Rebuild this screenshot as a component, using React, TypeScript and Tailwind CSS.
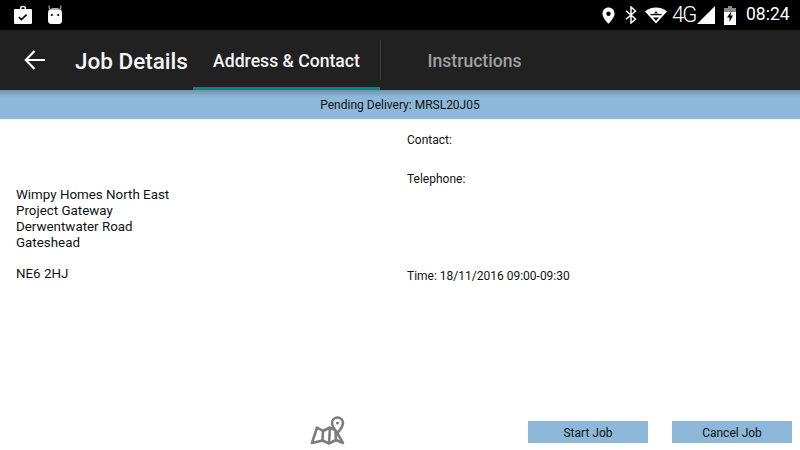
import React from "react";

function BagIcon() {
  return (
    <svg width="20" height="20" viewBox="0 0 20 20">
      <path fill="#fff" d="M7 3.200C7 1.600 8.200 0.800 10 0.800s3 .8 3 2.400V5h-1.400V3.200c0-.7-.6-1-1.600-1s-1.600.3-1.600 1V5H7z" />
      <rect x="1" y="4" width="18" height="15" rx="1.200" fill="#fff" />
      <path d="M5.800 12l2.600 2.600 5.200-5" fill="none" stroke="#000" strokeWidth="1.700" />
    </svg>
  );
}

function RobotIcon() {
  return (
    <svg width="16" height="20" viewBox="0 0 16 20">
      <path d="M2.500 4.500L2 .5M13.500 4.500L14 .5" stroke="#9a9a9a" strokeWidth="1.300" fill="none" />
      <path fill="#b5b5b5" d="M1 7c0-2.500 3-4 7-4s7 1.500 7 4z" />
      <rect x="1" y="5" width="14" height="14" rx="3.500" fill="#fff" />
      <circle cx="4.800" cy="10" r="1.100" fill="#000" />
      <circle cx="11.200" cy="10" r="1.100" fill="#000" />
    </svg>
  );
}

function StatusIcons() {
  return (
    <div className="flex items-center">
      <svg width="13" height="17" viewBox="0 0 14 18">
        <path
          fill="#fff"
          fillRule="evenodd"
          d="M7 .5C3.300.5.500 3.300.500 7c0 4.500 6.500 10.800 6.500 10.800S13.500 11.500 13.500 7C13.500 3.300 10.700.5 7 .5zm0 4.200a2.400 2.400 0 1 1 0 4.800 2.400 2.400 0 0 1 0-4.800z"
        />
      </svg>
      <svg width="12" height="18" viewBox="0 0 12 18" className="ml-[10px]">
        <path d="M1 4.800l9.500 8.200L6 17V1l4.500 4L1 13.200" fill="none" stroke="#fff" strokeWidth="1.500" />
      </svg>
      <svg width="22" height="17" viewBox="0 0 22 17" className="ml-[8px]">
        <path fill="#fff" d="M0 4.500C3 1.800 6.800.5 11 .5s8 1.300 11 4L11 16.500z" />
        <path fill="#000" d="M5.500 7h11v1.200h-11zM8 10.500h6L11 14z" />
        <path fill="#000" d="M9 6.500L11 4.200 13 6.500z" />
      </svg>
      <span className="ml-[5px] w-[24px] text-[22px] leading-none tracking-[-2px] font-[Roboto,sans-serif] font-light text-white">4G</span>
      <svg width="18" height="18" viewBox="0 0 18 18" className="ml-[1px]">
        <path fill="#fff" d="M18 0v18H0z" />
      </svg>
      <svg width="12" height="19" viewBox="0 0 12 19" className="ml-[9px]">
        <path fill="#8a8a8a" d="M4 0h4v2h4v5H0V2h4z" />
        <path fill="#fff" d="M0 6h12v13H0z" />
        <path fill="#000" d="M7.500 5L3 11.500h2.500V16L9 9.500H6.500z" />
      </svg>
      <span className="ml-[10px] w-[44px] text-[17.500px] leading-none font-[Roboto,sans-serif] text-white">08:24</span>
    </div>
  );
}

function MapIcon() {
  return (
    <svg width="36" height="30" viewBox="0 0 36 30" fill="none" stroke="#7d7d7d" strokeWidth="2.600">
      <path d="M2 27L7 11.500 13 15 20 11.500 26 15 33 27 26 24 19 27.500 12.500 24.500z" strokeLinejoin="round" />
      <path d="M12.500 24.500L13 15M19 27.500L20 11.500M26 24L25.500 16" />
      <path
        fill="#fff"
        d="M27.500 1.500a5.500 5.500 0 0 0-5.500 5.500c0 3.500 5.500 10 5.500 10s5.500-6.500 5.500-10A5.500 5.500 0 0 0 27.500 1.500z"
      />
      <circle cx="27.500" cy="7" r="1.500" fill="#7d7d7d" stroke="none" />
    </svg>
  );
}

export default function App() {
  return (
    <div className="flex h-[450px] w-[800px] flex-col overflow-hidden bg-white font-[Roboto,sans-serif]">
      <div className="flex h-[30px] shrink-0 items-center justify-between bg-black pl-[13px] pr-[10px]">
        <div className="flex items-center gap-[14px]">
          <BagIcon />
          <RobotIcon />
        </div>
        <StatusIcons />
      </div>

      <div className="flex h-[60px] shrink-0 bg-[#212121]">
        <div className="flex w-[193px] items-center pl-[23px] pt-[3px]">
          <svg width="24" height="24" viewBox="0 0 24 24" fill="none" stroke="#fff" strokeWidth="2.200" className="-mt-[3px]">
            <path d="M22 12H3M11.500 3L2.800 12l8.700 9" />
          </svg>
          <span className="ml-[28px] text-[22.500px] font-medium leading-none whitespace-nowrap text-[#f5f5f5]">Job Details</span>
        </div>
        <div className="flex h-full w-[187px] items-center justify-center border-b-[3px] border-[#00897b] pt-[5px] text-[17.600px] font-medium whitespace-nowrap text-[#f5f5f5]">
          Address &amp; Contact
        </div>
        <div className="mt-[10px] h-[40px] w-px bg-[#3d3d3d]" />
        <div className="flex h-full w-[187px] items-center justify-center pt-[2px] text-[17.600px] font-medium whitespace-nowrap text-[#a0a0a0]">
          Instructions
        </div>
      </div>

      <div className="flex h-[29px] shrink-0 items-center justify-center bg-[linear-gradient(#6f92b0_0px,#8db8da_7px,#8db8da_100%)] text-[12px] text-[#111]">
        Pending Delivery: MRSL20J05
      </div>

      <div className="flex flex-1 text-[#111]">
        <div className="w-[407px] pl-[16px] pt-[68px] text-[13.360px] leading-[16px]">
          <div>Wimpy Homes North East</div>
          <div>Project Gateway</div>
          <div>Derwentwater Road</div>
          <div>Gateshead</div>
          <div className="mt-[15px]">NE6 2HJ</div>
        </div>
        <div className="flex flex-1 flex-col pt-[13px] text-[12px] leading-[16px]">
          <div>Contact:</div>
          <div className="mt-[23px]">Telephone:</div>
          <div className="mt-[81px]">Time: 18/11/2016 09:00-09:30</div>
        </div>
      </div>

      <div className="relative flex h-[37px] shrink-0 items-start justify-end gap-[24px] pr-[8px] pt-[8px]">
        <div className="absolute left-[310px] top-[3px]">
          <MapIcon />
        </div>
        <button className="h-[22px] w-[120px] bg-[#8db8da] pt-[2px] text-[12px] text-[#111]">Start Job</button>
        <button className="h-[22px] w-[120px] bg-[#8db8da] pt-[2px] text-[12px] text-[#111]">Cancel Job</button>
      </div>
    </div>
  );
}
